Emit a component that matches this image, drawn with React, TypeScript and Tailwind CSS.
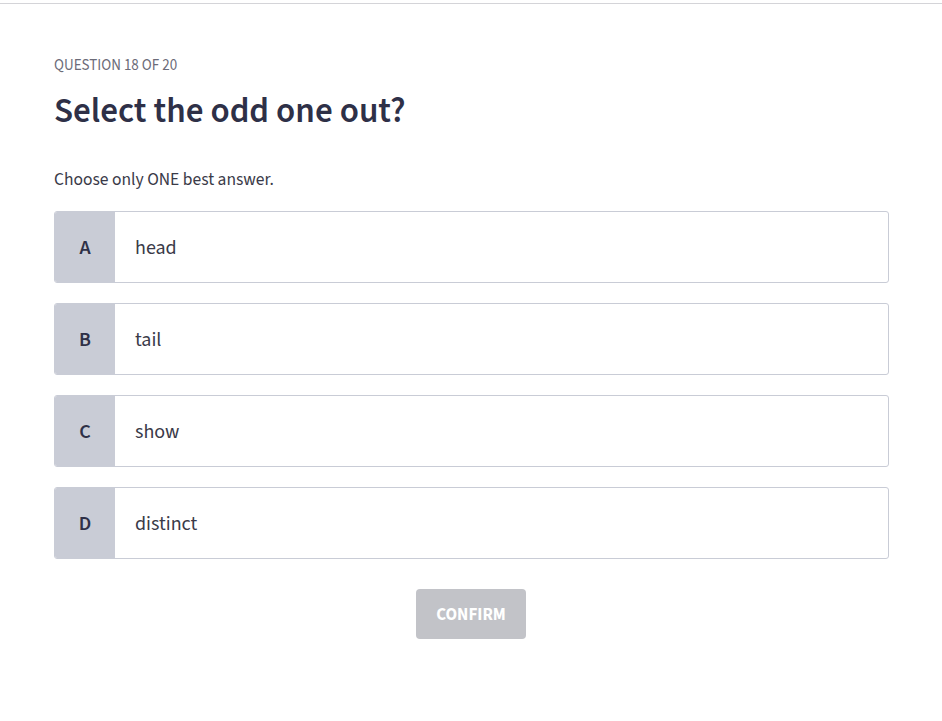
const options = [
  { key: 'A', label: 'head' },
  { key: 'B', label: 'tail' },
  { key: 'C', label: 'show' },
  { key: 'D', label: 'distinct' },
];

export default function App() {
  return (
    <div
      className="min-h-screen bg-white"
      style={{ fontFamily: '"Source Sans Pro", "Source Sans 3", Lato, "Liberation Sans", sans-serif' }}
    >
      <div className="h-[3px]" />
      <div className="border-t border-[#d4d4d8]" />
      <main className="pl-[54px] pr-[53px] pt-[52px]">
        <p className="text-[15px] leading-[20px] text-[#6b6b78] uppercase">Question 18 of 20</p>
        <h1 className="mt-[13px] text-[35px] leading-[44px] font-semibold text-[#2e3047]">Select the odd one out?</h1>
        <p className="mt-[35px] text-[17.5px] leading-[24px] text-[#3a3a48]">Choose only ONE best answer.</p>
        <div className="mt-[19px] flex flex-col gap-5">
          {options.map((o) => (
            <button
              key={o.key}
              className="flex h-[72px] w-full overflow-hidden rounded-[3px] border border-[#c9ccd6] bg-white text-left"
            >
              <span className="flex w-[60px] shrink-0 items-center justify-center bg-[#c9ccd6] pt-[2px] text-[20px] font-semibold text-[#2e3047]">
                {o.key}
              </span>
              <span className="flex items-center pl-5 pt-[2px] text-[20px] text-[#3a3a48]">{o.label}</span>
            </button>
          ))}
        </div>
        <div className="mt-[30px] flex justify-center pr-[1px]">
          <button className="h-[50px] w-[110px] rounded-[4px] bg-[#c2c3c8] pt-[4px] text-[17px] font-bold text-white">
            CONFIRM
          </button>
        </div>
      </main>
    </div>
  );
}
